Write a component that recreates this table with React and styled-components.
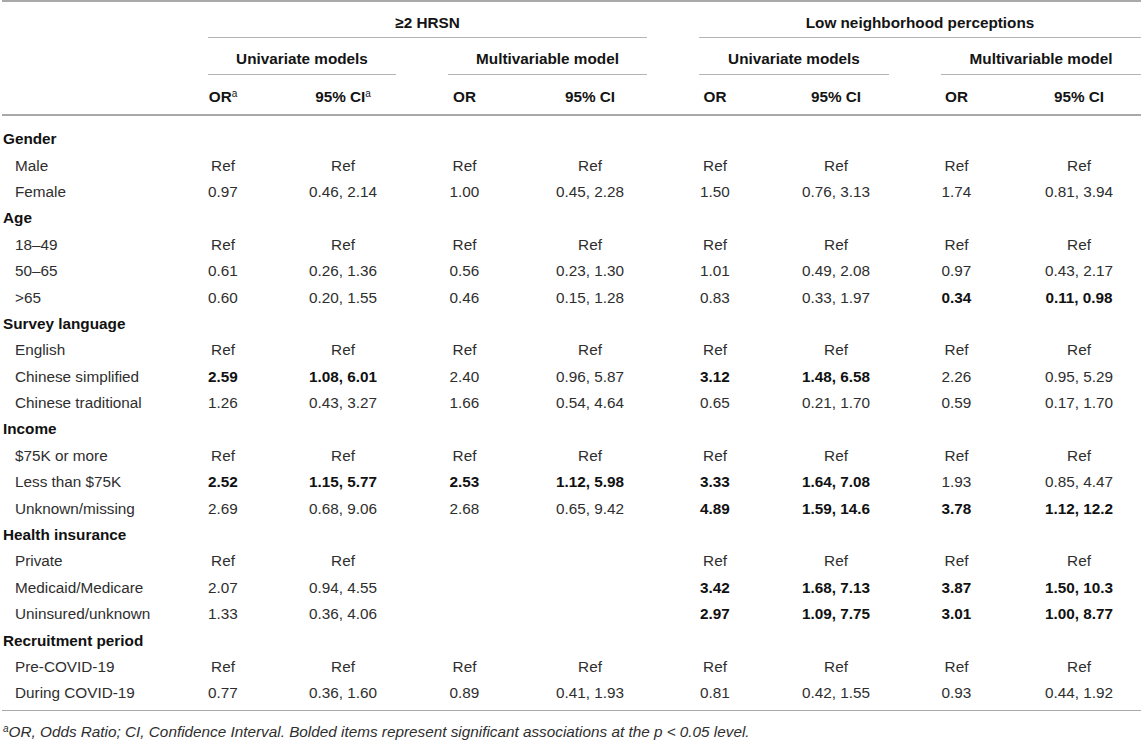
import React from "react";
import styled, { createGlobalStyle } from "styled-components";

const GlobalStyle = createGlobalStyle`
  html, body {
    margin: 0;
    padding: 0;
    background: #ffffff;
  }
  body {
    font-family: "Liberation Sans", Arial, Helvetica, sans-serif;
    color: #1f1f1f;
    -webkit-font-smoothing: antialiased;
  }
`;

const COLS = "161px 120px 120px 123px 128px 122px 120px 121px 1fr";

const Page = styled.div`
  width: 1139px;
  margin-left: 2px;
  font-size: 15.3px;
`;

const Table = styled.div`
  border-top: 2px solid #a9a9a9;
  border-bottom: 1px solid #a9a9a9;
`;

const HeadRow = styled.div`
  display: grid;
  grid-template-columns: ${COLS};
  border-bottom: ${(p) => (p.$thick ? "2px solid #a9a9a9" : "none")};
`;

const GroupHead = styled.div`
  grid-column: ${(p) => p.$span};
  margin-left: 45px;
  margin-right: ${(p) => (p.$last ? "0" : "7px")};
  padding: ${(p) => p.$pad};
  line-height: 18px;
  font-weight: 700;
  text-align: center;
  border-bottom: 1px solid #b3b3b3;
  white-space: nowrap;
  color: #141414;
`;

const ColHead = styled.div`
  padding: 13px 0 8px;
  line-height: 18px;
  font-weight: 700;
  text-align: center;
  white-space: nowrap;
  color: #141414;
`;

const Sup = styled.sup`
  font-size: 10px;
  line-height: 0;
  vertical-align: 5px;
  font-weight: ${(p) => (p.$light ? 400 : "inherit")};
`;

const Body = styled.div`
  padding: 10px 0 3px;
`;

const Row = styled.div`
  display: grid;
  grid-template-columns: ${COLS};
  align-items: center;
  height: 26.4px;
`;

const Label = styled.div`
  padding-left: ${(p) => (p.$category ? "1px" : "13px")};
  font-weight: ${(p) => (p.$category ? 700 : 400)};
  white-space: nowrap;
  color: ${(p) => (p.$category ? "#111" : "#2e2e2e")};
`;

const Cell = styled.div`
  text-align: center;
  white-space: nowrap;
  font-weight: ${(p) => (p.$bold ? 700 : 400)};
  color: ${(p) => (p.$bold ? "#111" : "#2e2e2e")};
`;

const Footnote = styled.div`
  padding: 12px 0 0 1px;
  line-height: 18px;
  font-size: 15.3px;
  font-style: italic;
  color: #2e2e2e;
  white-space: nowrap;
`;

const R8 = ["Ref", "Ref", "Ref", "Ref", "Ref", "Ref", "Ref", "Ref"];

const sections = [
  {
    title: "Gender",
    rows: [
      ["Male", R8],
      ["Female", ["0.97", "0.46, 2.14", "1.00", "0.45, 2.28", "1.50", "0.76, 3.13", "1.74", "0.81, 3.94"]],
    ],
  },
  {
    title: "Age",
    rows: [
      ["18–49", R8],
      ["50–65", ["0.61", "0.26, 1.36", "0.56", "0.23, 1.30", "1.01", "0.49, 2.08", "0.97", "0.43, 2.17"]],
      [">65", ["0.60", "0.20, 1.55", "0.46", "0.15, 1.28", "0.83", "0.33, 1.97", "*0.34", "*0.11, 0.98"]],
    ],
  },
  {
    title: "Survey language",
    rows: [
      ["English", R8],
      ["Chinese simplified", ["*2.59", "*1.08, 6.01", "2.40", "0.96, 5.87", "*3.12", "*1.48, 6.58", "2.26", "0.95, 5.29"]],
      ["Chinese traditional", ["1.26", "0.43, 3.27", "1.66", "0.54, 4.64", "0.65", "0.21, 1.70", "0.59", "0.17, 1.70"]],
    ],
  },
  {
    title: "Income",
    rows: [
      ["$75K or more", R8],
      ["Less than $75K", ["*2.52", "*1.15, 5.77", "*2.53", "*1.12, 5.98", "*3.33", "*1.64, 7.08", "1.93", "0.85, 4.47"]],
      ["Unknown/missing", ["2.69", "0.68, 9.06", "2.68", "0.65, 9.42", "*4.89", "*1.59, 14.6", "*3.78", "*1.12, 12.2"]],
    ],
  },
  {
    title: "Health insurance",
    rows: [
      ["Private", ["Ref", "Ref", "", "", "Ref", "Ref", "Ref", "Ref"]],
      ["Medicaid/Medicare", ["2.07", "0.94, 4.55", "", "", "*3.42", "*1.68, 7.13", "*3.87", "*1.50, 10.3"]],
      ["Uninsured/unknown", ["1.33", "0.36, 4.06", "", "", "*2.97", "*1.09, 7.75", "*3.01", "*1.00, 8.77"]],
    ],
  },
  {
    title: "Recruitment period",
    rows: [
      ["Pre-COVID-19", R8],
      ["During COVID-19", ["0.77", "0.36, 1.60", "0.89", "0.41, 1.93", "0.81", "0.42, 1.55", "0.93", "0.44, 1.92"]],
    ],
  },
];

function DataCell({ value }) {
  const bold = value.startsWith("*");
  return <Cell $bold={bold}>{bold ? value.slice(1) : value}</Cell>;
}

export default function App() {
  return (
    <>
      <GlobalStyle />
      <Page>
        <Table>
          <HeadRow>
            <GroupHead $span="2 / 6" $pad="12px 0 5px">≥2 HRSN</GroupHead>
            <GroupHead $span="6 / 10" $pad="12px 0 5px" $last>
              Low neighborhood perceptions
            </GroupHead>
          </HeadRow>
          <HeadRow>
            <GroupHead $span="2 / 4" $pad="12px 0 6px">Univariate models</GroupHead>
            <GroupHead $span="4 / 6" $pad="12px 0 6px">Multivariable model</GroupHead>
            <GroupHead $span="6 / 8" $pad="12px 0 6px">Univariate models</GroupHead>
            <GroupHead $span="8 / 10" $pad="12px 0 6px" $last>
              Multivariable model
            </GroupHead>
          </HeadRow>
          <HeadRow $thick>
            <div />
            <ColHead>
              OR<Sup $light>a</Sup>
            </ColHead>
            <ColHead>
              95% CI<Sup $light>a</Sup>
            </ColHead>
            <ColHead>OR</ColHead>
            <ColHead>95% CI</ColHead>
            <ColHead>OR</ColHead>
            <ColHead>95% CI</ColHead>
            <ColHead>OR</ColHead>
            <ColHead>95% CI</ColHead>
          </HeadRow>
          <Body>
            {sections.map((s) => (
              <React.Fragment key={s.title}>
                <Row>
                  <Label $category>{s.title}</Label>
                </Row>
                {s.rows.map(([label, values]) => (
                  <Row key={label}>
                    <Label>{label}</Label>
                    {values.map((v, i) => (
                      <DataCell key={i} value={v} />
                    ))}
                  </Row>
                ))}
              </React.Fragment>
            ))}
          </Body>
        </Table>
        <Footnote>
          <Sup>a</Sup>OR, Odds Ratio; CI, Confidence Interval. Bolded items represent significant
          associations at the p &lt; 0.05 level.
        </Footnote>
      </Page>
    </>
  );
}
